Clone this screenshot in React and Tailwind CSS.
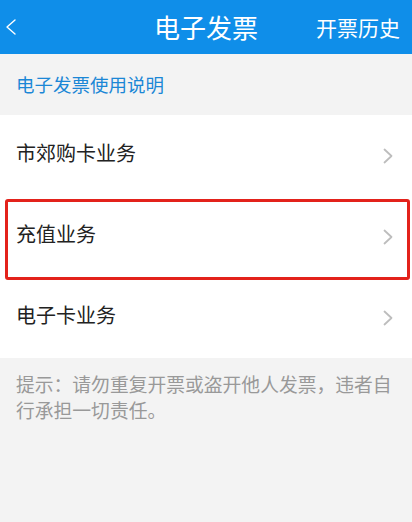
const rows = ["市郊购卡业务", "充值业务", "电子卡业务"];

function Chevron({ className }) {
  return (
    <svg width="12" height="18" viewBox="0 0 12 18" className={className} fill="none">
      <path d="M2.5 2.5l7 6.5-7 6.5" stroke="currentColor" strokeWidth="1.8" strokeLinecap="round" strokeLinejoin="round" />
    </svg>
  );
}

export default function App() {
  return (
    <div
      className="flex min-h-[522px] w-[412px] flex-col bg-[#f3f3f3]"
      style={{ fontFamily: '"Noto Sans CJK SC", "Noto Sans", sans-serif' }}
    >
      <header className="flex h-[54px] items-center bg-[#0f8ee9] text-white">
        <div className="flex w-[110px] items-center pl-[5px]">
          <svg width="12" height="18" viewBox="0 0 12 18" fill="none">
            <path d="M10 2L2 9l8 7" stroke="currentColor" strokeWidth="1.4" strokeLinecap="round" strokeLinejoin="round" />
          </svg>
        </div>
        <h1 className="flex-1 text-center text-[26px] font-normal leading-none">电子发票</h1>
        <div className="flex w-[110px] justify-end pr-[12px] text-[21px] leading-none">开票历史</div>
      </header>

      <div className="flex h-[61px] items-center px-[16px] text-[18.5px] text-[#1b87d6]">电子发票使用说明</div>

      <ul className="bg-white">
        {rows.map((label, i) => (
          <li key={label} className="relative flex h-[81px] items-center justify-between pl-[16px] pr-[18px]">
            <span className="mb-[5px] text-[20px] text-[#222]">{label}</span>
            <Chevron className="text-[#bdbdbd]" />
            {i === 1 && (
              <div className="pointer-events-none absolute bottom-[-3px] left-[5px] right-[2px] top-[3px] rounded-[3px] border-[3px] border-[#e3221b]" />
            )}
          </li>
        ))}
      </ul>

      <p className="px-[16px] pr-[12px] pt-[13px] text-[18.8px] leading-[26px] text-[#999]">
        提示：请勿重复开票或盗开他人发票，违者自行承担一切责任。
      </p>
    </div>
  );
}
